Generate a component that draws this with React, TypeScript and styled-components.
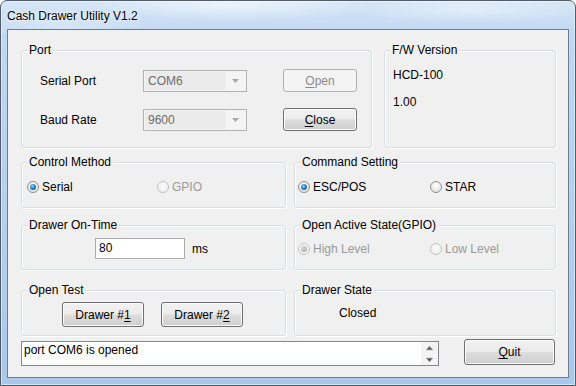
import React from "react";
import styled, { createGlobalStyle } from "styled-components";

const GlobalStyle = createGlobalStyle`
  html, body {
    margin: 0;
    padding: 0;
    background: #ffffff;
  }
  body {
    font-family: "Liberation Sans", Arial, sans-serif;
    font-size: 12px;
    color: #000;
  }
  * {
    box-sizing: border-box;
  }
`;

const Window = styled.div`
  width: 576px;
  height: 386px;
  display: flex;
  flex-direction: column;
  border: 1px solid #4f5d6c;
  border-radius: 7px 7px 0 0;
  background:
    radial-gradient(150px 16px at 230px 4px, rgba(255, 255, 255, 0.55), transparent),
    radial-gradient(120px 14px at 470px 8px, rgba(255, 255, 255, 0.4), transparent),
    radial-gradient(90px 12px at 60px 26px, rgba(255, 255, 255, 0.3), transparent),
    linear-gradient(180deg, #d4e5f7 0%, #bfd7f1 10%, #b4cfec 60%, #a9c8e9 100%);
  box-shadow: inset 0 0 0 1px rgba(255, 255, 255, 0.45);
  overflow: hidden;
`;

const TitleBar = styled.div`
  height: 28px;
  padding: 8px 0 0 6px;
  line-height: 14px;
  font-size: 12px;
  color: #000;
  text-shadow: 0 0 6px rgba(255, 255, 255, 0.95), 0 0 3px rgba(255, 255, 255, 0.9);
`;

const Client = styled.div`
  flex: 1;
  margin: 0 6px 7px 6px;
  border: 1px solid #6c7d8f;
  background: #f0f0f0;
  padding: 20px 12px 0 13px;
  display: flex;
  flex-direction: column;
`;

const Row = styled.div<{ $gap: number; $mt?: number }>`
  display: flex;
  gap: ${(p) => p.$gap}px;
  margin-top: ${(p) => p.$mt ?? 0}px;
`;

const BottomRow = styled.div`
  display: flex;
  justify-content: space-between;
  align-items: flex-start;
  margin-top: 3px;
`;

const Group = styled.div<{ $w: number; $h: number }>`
  position: relative;
  width: ${(p) => p.$w}px;
  height: ${(p) => p.$h}px;
  border: 1px solid #d5dfe5;
  border-radius: 3px;
  box-shadow: inset 1px 1px 0 #ffffff, 1px 1px 0 #ffffff;
`;

const Caption = styled.span`
  position: absolute;
  top: -8px;
  left: 5px;
  padding: 0 2px;
  line-height: 14px;
  background: #f0f0f0;
  color: #000;
`;

const PortGrid = styled.div`
  display: grid;
  grid-template-columns: 67px 104px 74px;
  grid-auto-rows: 23px;
  column-gap: 36px;
  row-gap: 16px;
  align-items: center;
  padding: 18px 0 0 18px;
`;

const Label = styled.span`
  line-height: 14px;
`;

const Combo = styled.div`
  height: 22px;
  display: flex;
  border: 1px solid #adb2b5;
  background: #f4f4f4;
  padding: 1px;
`;

const ComboText = styled.div`
  flex: 1;
  background: #ebebeb;
  color: #6d6d6d;
  line-height: 18px;
  padding-left: 3px;
`;

const ComboArrow = styled.div`
  width: 19px;
  display: flex;
  align-items: center;
  justify-content: center;
`;

const Button = styled.button<{ $w: number; $h: number }>`
  width: ${(p) => p.$w}px;
  height: ${(p) => p.$h}px;
  padding: 0;
  font-family: "Liberation Sans", Arial, sans-serif;
  font-size: 12px;
  color: #000;
  border: 1px solid #707070;
  border-radius: 3px;
  background: linear-gradient(180deg, #f2f2f2 0%, #ebebeb 48%, #dddddd 52%, #cfcfcf 100%);
  box-shadow: inset 0 0 0 1px #fcfcfc;

  &:disabled {
    color: #8a8a8a;
    border-color: #adb2b5;
    background: #f4f4f4;
    box-shadow: none;
  }

  u {
    text-decoration-thickness: 1px;
    text-underline-offset: 2px;
  }
`;

const InfoStack = styled.div`
  display: flex;
  flex-direction: column;
  gap: 13px;
  padding: 17px 0 0 8px;
  line-height: 14px;
`;

const RadioRow = styled.div<{ $pl: number; $col: number; $pt: number }>`
  display: grid;
  grid-template-columns: ${(p) => p.$col}px auto;
  padding: ${(p) => p.$pt}px 0 0 ${(p) => p.$pl}px;
`;

const RadioItem = styled.label<{ $disabled?: boolean }>`
  display: flex;
  align-items: center;
  gap: 3px;
  line-height: 14px;
  color: ${(p) => (p.$disabled ? "#9a9a9a" : "#000")};
`;

const RadioDot = styled.span<{ $checked?: boolean; $disabled?: boolean }>`
  position: relative;
  width: 12px;
  height: 12px;
  border-radius: 50%;
  border: 1px solid ${(p) => (p.$disabled ? "#c2c2c2" : "#8e8f8f")};
  background: ${(p) =>
    p.$disabled
      ? "radial-gradient(circle at 50% 40%, #fbfbfb, #ececec)"
      : "radial-gradient(circle at 50% 35%, #ffffff, #dcdcdc)"};

  &::after {
    content: "";
    display: ${(p) => (p.$checked ? "block" : "none")};
    position: absolute;
    inset: 2px;
    border-radius: 50%;
    background: ${(p) =>
      p.$disabled
        ? "radial-gradient(circle at 40% 35%, #d8d8d8, #a2a2a2)"
        : "radial-gradient(circle at 40% 35%, #8fd0ff, #1f78bb 55%, #0b3f6e)"};
  }
`;

const OnTimeRow = styled.div`
  display: flex;
  align-items: center;
  gap: 7px;
  padding: 12px 0 0 73px;
`;

const TextInput = styled.div`
  width: 90px;
  height: 21px;
  border: 1px solid #abadb3;
  background: #ffffff;
  line-height: 19px;
  padding-left: 3px;
`;

const ButtonRow = styled.div`
  display: flex;
  gap: 17px;
  padding: 11px 0 0 40px;
`;

const StateText = styled.div`
  padding: 15px 0 0 44px;
  line-height: 14px;
`;

const LogBox = styled.div`
  width: 418px;
  height: 25px;
  margin-top: 2px;
  display: flex;
  border: 1px solid #828790;
  background: #ffffff;
`;

const LogText = styled.div`
  flex: 1;
  padding: 1px 0 0 2px;
  line-height: 14px;
`;

const Spinner = styled.div`
  width: 17px;
  display: flex;
  flex-direction: column;
  align-items: center;
  justify-content: space-between;
  padding: 4px 0 3px;
  background: #f4f4f4;
`;

const Arrow = ({ dir }: { dir: "up" | "down" }) => (
  <svg width="7" height="5" viewBox="0 0 7 5">
    {dir === "up" ? (
      <path d="M0 4 L3.5 0 L7 4 Z" fill="#5a5a5a" stroke="#bcbcbc" strokeWidth="0.6" />
    ) : (
      <path d="M0 1 L3.5 5 L7 1 Z" fill="#5a5a5a" stroke="#bcbcbc" strokeWidth="0.6" />
    )}
  </svg>
);

const Radio = ({
  label,
  checked,
  disabled,
}: {
  label: string;
  checked?: boolean;
  disabled?: boolean;
}) => (
  <RadioItem $disabled={disabled}>
    <RadioDot $checked={checked} $disabled={disabled} />
    {label}
  </RadioItem>
);

const ComboBox = ({ value }: { value: string }) => (
  <Combo>
    <ComboText>{value}</ComboText>
    <ComboArrow>
      <svg width="7" height="4" viewBox="0 0 7 4">
        <path d="M0 0 L7 0 L3.5 4 Z" fill="#a8a8a8" />
      </svg>
    </ComboArrow>
  </Combo>
);

export default function App() {
  return (
    <>
      <GlobalStyle />
      <Window>
        <TitleBar>Cash Drawer Utility V1.2</TitleBar>
        <Client>
          <Row $gap={12}>
            <Group $w={351} $h={98}>
              <Caption>Port</Caption>
              <PortGrid>
                <Label>Serial Port</Label>
                <ComboBox value="COM6" />
                <Button $w={74} $h={23} disabled>
                  <u>O</u>pen
                </Button>
                <Label>Baud Rate</Label>
                <ComboBox value="9600" />
                <Button $w={74} $h={23}>
                  <u>C</u>lose
                </Button>
              </PortGrid>
            </Group>
            <Group $w={172} $h={98}>
              <Caption>F/W Version</Caption>
              <InfoStack>
                <span>HCD-100</span>
                <span>1.00</span>
              </InfoStack>
            </Group>
          </Row>

          <Row $gap={8} $mt={14}>
            <Group $w={265} $h={46}>
              <Caption>Control Method</Caption>
              <RadioRow $pl={5} $col={130} $pt={17}>
                <Radio label="Serial" checked />
                <Radio label="GPIO" disabled />
              </RadioRow>
            </Group>
            <Group $w={262} $h={46}>
              <Caption>Command Setting</Caption>
              <RadioRow $pl={3} $col={132} $pt={17}>
                <Radio label="ESC/POS" checked />
                <Radio label="STAR" />
              </RadioRow>
            </Group>
          </Row>

          <Row $gap={8} $mt={17}>
            <Group $w={265} $h={45}>
              <Caption>Drawer On-Time</Caption>
              <OnTimeRow>
                <TextInput>80</TextInput>
                <span>ms</span>
              </OnTimeRow>
            </Group>
            <Group $w={262} $h={45}>
              <Caption>Open Active State(GPIO)</Caption>
              <RadioRow $pl={3} $col={132} $pt={16}>
                <Radio label="High Level" checked disabled />
                <Radio label="Low Level" disabled />
              </RadioRow>
            </Group>
          </Row>

          <Row $gap={8} $mt={20}>
            <Group $w={265} $h={46}>
              <Caption>Open Test</Caption>
              <ButtonRow>
                <Button $w={82} $h={25}>
                  Drawer #<u>1</u>
                </Button>
                <Button $w={82} $h={25}>
                  Drawer #<u>2</u>
                </Button>
              </ButtonRow>
            </Group>
            <Group $w={262} $h={46}>
              <Caption>Drawer State</Caption>
              <StateText>Closed</StateText>
            </Group>
          </Row>

          <BottomRow>
            <LogBox>
              <LogText>port COM6 is opened</LogText>
              <Spinner>
                <Arrow dir="up" />
                <Arrow dir="down" />
              </Spinner>
            </LogBox>
            <Button $w={91} $h={26} style={{ marginRight: 1 }}>
              <u>Q</u>uit
            </Button>
          </BottomRow>
        </Client>
      </Window>
    </>
  );
}
